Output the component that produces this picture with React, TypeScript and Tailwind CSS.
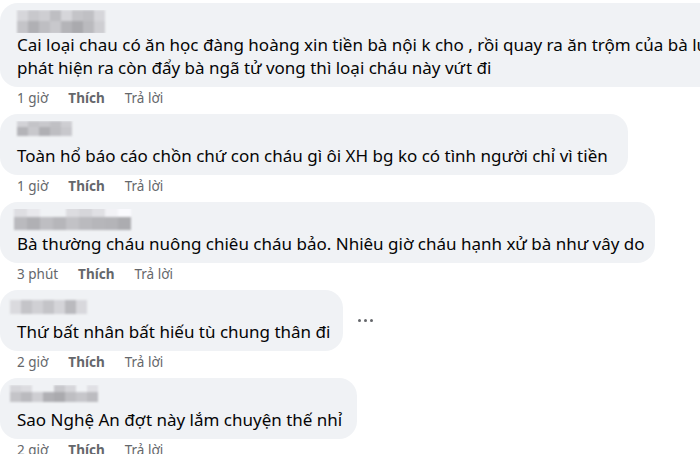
import React from "react";

type Cell = number | null;

function Mosaic({ rows, cell, x }: { rows: Cell[][]; cell: [number, number][]; x: number }) {
  return (
    <div className="flex flex-col blur-[1px]" style={{ marginLeft: x }}>
      {rows.map((r, i) => (
        <div key={i} className="flex">
          {r.map((v, j) => (
            <div
              key={j}
              style={{
                width: cell[i][0],
                height: cell[i][1],
                background: v === null ? "transparent" : `rgb(${v},${v},${v + 4})`,
              }}
            />
          ))}
        </div>
      ))}
    </div>
  );
}

function Meta({ time }: { time: string }) {
  return (
    <div
      className="flex h-[22px] items-center gap-[20px] pl-[17px] text-[13.5px] text-[#65676b]"
      style={{ fontFamily: '"Noto Sans", "Open Sans", sans-serif' }}
    >
      <span>{time}</span>
      <span className="font-bold">Thích</span>
      <span>Trả lời</span>
    </div>
  );
}

function Bubble({
  width,
  children,
  name,
}: {
  width: string;
  children: React.ReactNode;
  name: React.ReactNode;
}) {
  return (
    <div className={`${width} shrink-0 rounded-[18px] bg-[#f0f2f5] pb-[8px] pt-[7px]`}>
      <div className="h-[23px] overflow-hidden">{name}</div>
      <div className="whitespace-nowrap pl-[17px] text-[17px] leading-[23px] text-[#050505]">{children}</div>
    </div>
  );
}

export default function App() {
  return (
    <div
      className="h-[454px] w-[700px] overflow-hidden bg-white pt-[3px]"
      style={{ fontFamily: '"Noto Sans", "Open Sans", sans-serif' }}
    >
      <div className="flex flex-col gap-[5px]">
        <div>
          <Bubble
            width="w-[760px]"
            name={
              <Mosaic
                x={17}
                cell={[
                  [11, 11],
                  [11, 13],
                ]}
                rows={[
                  [214, 200, 206, 190, 214, 196, 192, 214],
                  [196, 176, 190, 200, 180, 170, 186, 206],
                ]}
              />
            }
          >
            <div>Cai loại chau có ăn học đàng hoàng xin tiền bà nội k cho , rồi quay ra ăn trộm của bà lúc</div>
            <div>phát hiện ra còn đẩy bà ngã tử vong thì loại cháu này vứt đi</div>
          </Bubble>
          <Meta time="1 giờ" />
        </div>

        <div>
          <Bubble
            width="w-[628px]"
            name={
              <Mosaic
                x={17}
                cell={[
                  [11, 6],
                  [11, 9],
                ]}
                rows={[
                  [210, 196, 200, 192, 206],
                  [180, 200, 176, 190, 200],
                ]}
              />
            }
          >
            Toàn hổ báo cáo chồn chứ con cháu gì ôi XH bg ko có tình người chỉ vì tiền
          </Bubble>
          <Meta time="1 giờ" />
        </div>

        <div>
          <Bubble
            width="w-[655px]"
            name={
              <div className="-mt-[5px]">
                <Mosaic
                  x={14}
                  cell={[
                    [13, 13],
                    [13, 13],
                  ]}
                  rows={[
                    [222, 232, null, null, 220, 214, 224, 242, 250],
                    [186, 176, 190, 182, 194, 186, 182, 180, 172],
                  ]}
                />
              </div>
            }
          >
            Bà thường cháu nuông chiêu cháu bảo. Nhiêu giờ cháu hạnh xử bà như vây do
          </Bubble>
          <Meta time="3 phút" />
        </div>

        <div className="flex items-center">
          <div>
            <Bubble
              width="w-[343px]"
              name={
                <div className="mt-[3px]">
                  <Mosaic
                    x={10}
                    cell={[[11, 14]]}
                    rows={[[218, 196, 208, 196, 212, 186, 216]]}
                  />
                </div>
              }
            >
              Thứ bất nhân bất hiếu tù chung thân đi
            </Bubble>
          </div>
          <div className="ml-[15px] flex gap-[3px]">
            <span className="h-[3px] w-[3px] rounded-full bg-[#65676b]" />
            <span className="h-[3px] w-[3px] rounded-full bg-[#65676b]" />
            <span className="h-[3px] w-[3px] rounded-full bg-[#65676b]" />
          </div>
        </div>
        <div className="-mt-[5px]">
          <Meta time="2 giờ" />
        </div>

        <div>
          <Bubble
            width="w-[357px]"
            name={
              <Mosaic
                x={10}
                cell={[
                  [11, 7],
                  [11, 10],
                ]}
                rows={[
                  [214, 220, null, null, 200, 214, null, 224],
                  [196, 186, 206, 176, 170, 190, 198, 188],
                ]}
              />
            }
          >
            Sao Nghệ An đợt này lắm chuyện thế nhỉ
          </Bubble>
          <Meta time="2 giờ" />
        </div>
      </div>
    </div>
  );
}
